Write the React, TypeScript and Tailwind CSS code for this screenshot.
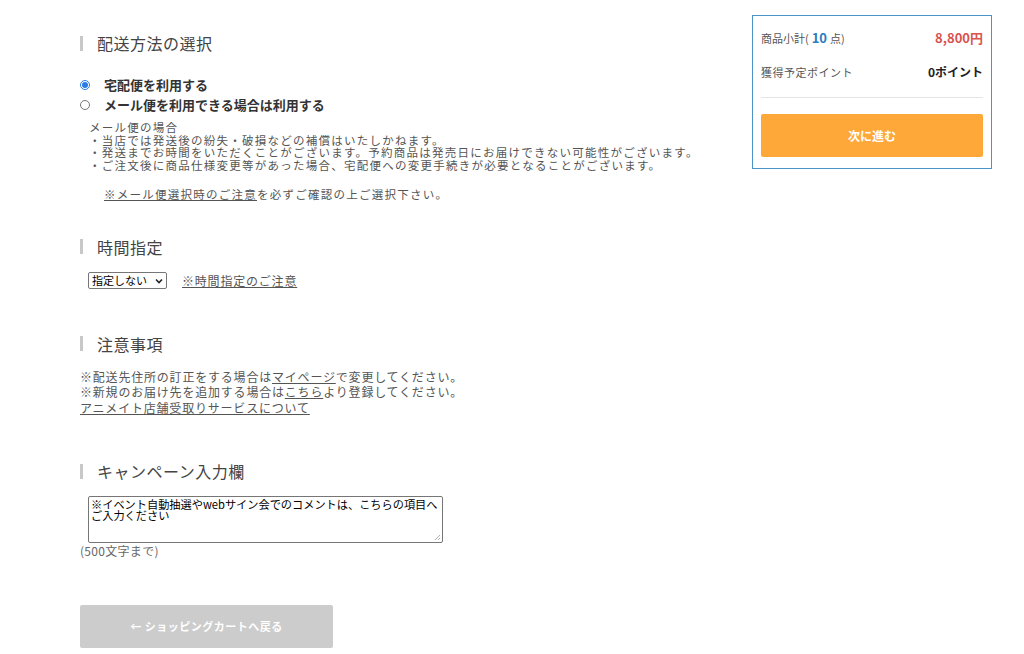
import React from "react";

const font = { fontFamily: '"Noto Sans CJK JP", "Noto Sans", sans-serif' };

function Heading({ children }: { children: React.ReactNode }) {
  return (
    <div className="flex items-center h-[20px]">
      <div className="w-[3px] h-[15px] bg-[#c8c8c8] mr-[14px]" />
      <span className="text-[16px] text-[#444] tracking-[0.5px] leading-[20px]">{children}</span>
    </div>
  );
}

export default function App() {
  return (
    <div style={font} className="w-[1024px] h-[654px] bg-white relative overflow-hidden text-[#333]">
      <div className="flex">
        {/* main column */}
        <div className="pl-[80px] w-[720px] pt-[33px]">
          <Heading>配送方法の選択</Heading>
          <div className="mt-[22px] flex flex-col gap-[1px]">
            <label className="flex items-center h-[19px]">
              <span className="w-[10px] h-[10px] rounded-full border border-[#2a7be4] flex items-center justify-center">
                <span className="w-[6px] h-[6px] rounded-full bg-[#2a7be4]" />
              </span>
              <span className="ml-[14px] text-[13px] font-bold text-[#333]">宅配便を利用する</span>
            </label>
            <label className="flex items-center h-[19px]">
              <span className="w-[10px] h-[10px] rounded-full border border-[#767676]" />
              <span className="ml-[14px] text-[13px] font-bold text-[#333]">メール便を利用できる場合は利用する</span>
            </label>
          </div>
          <div className="mt-[7px] pl-[9px] text-[11.5px] leading-[12.7px] tracking-[1.25px] text-[#555]">
            <div>メール便の場合</div>
            <div>・当店では発送後の紛失・破損などの補償はいたしかねます。</div>
            <div>・発送までお時間をいただくことがございます。予約商品は発売日にお届けできない可能性がございます。</div>
            <div>・ご注文後に商品仕様変更等があった場合、宅配便への変更手続きが必要となることがございます。</div>
            <div className="mt-[16px] pl-[15px]">
              <span className="underline">※メール便選択時のご注意</span>を必ずご確認の上ご選択下さい。
            </div>
          </div>

          <div className="mt-[36px]">
            <Heading>時間指定</Heading>
          </div>
          <div className="mt-[15px] flex items-center pl-[8px]">
            <div className="h-[17px] w-[79px] border border-[#767676] rounded-[2px] flex items-center justify-between px-[3px] text-[11px] text-black">
              <span>指定しない</span>
              <svg width="8" height="6" viewBox="0 0 8 6"><path d="M1 1.5 L4 4.5 L7 1.5" stroke="#222" strokeWidth="1.6" fill="none" /></svg>
            </div>
            <span className="ml-[15px] text-[12px] tracking-[0.8px] underline text-[#555]">※時間指定のご注意</span>
          </div>

          <div className="mt-[44px]">
            <Heading>注意事項</Heading>
          </div>
          <div className="mt-[15px] text-[12px] leading-[15.5px] tracking-[0.8px] text-[#555]">
            <div>※配送先住所の訂正をする場合は<span className="underline">マイページ</span>で変更してください。</div>
            <div>※新規のお届け先を追加する場合は<span className="underline">こちら</span>より登録してください。</div>
            <div><span className="underline">アニメイト店舗受取りサービスについて</span></div>
          </div>

          <div className="mt-[46px]">
            <Heading>キャンペーン入力欄</Heading>
          </div>
          <div className="mt-[15px] pl-[8px]">
            <div className="relative w-[355px] h-[47px] border border-[#767676] rounded-[2px] px-[2px] pt-[2px] text-[11.2px] leading-[11px] text-black">
              ※イベント自動抽選やwebサイン会でのコメントは、こちらの項目へご入力ください
              <svg className="absolute right-[1px] bottom-[1px]" width="7" height="7" viewBox="0 0 7 7">
                <path d="M6 1 L1 6 M6 4 L4 6" stroke="#999" strokeWidth="0.8" />
              </svg>
            </div>
          </div>
          <div className="mt-[0px] text-[12px] text-[#666] tracking-[0.3px] leading-[16px]">(500文字まで)</div>

          <div className="mt-[46px] w-[253px] h-[43px] bg-[#cccccc] rounded-[2px] flex items-center justify-center text-white text-[11px] font-bold tracking-[0.5px]">
            ← ショッピングカートへ戻る
          </div>
        </div>

        {/* sidebar */}
        <div className="ml-[32px] mt-[15px] w-[240px] h-[154px] border border-[#4b94c8] px-[8px] pt-[13px]">
          <div className="flex items-center justify-between h-[18px]">
            <span className="text-[11px] text-[#555]">商品小計(<span className="text-[#2a7bc0] font-bold text-[13px]"> 10 </span>点)</span>
            <span className="text-[13px] font-bold text-[#d9534f]">8,800円</span>
          </div>
          <div className="flex items-center justify-between h-[18px] mt-[16px]">
            <span className="text-[11px] text-[#555] tracking-[0.5px]">獲得予定ポイント</span>
            <span className="text-[12px] font-bold text-[#222]">0ポイント</span>
          </div>
          <div className="mt-[16px] border-t border-[#e5e5e5]" />
          <div className="mt-[16px] h-[43px] bg-[#ffa83a] rounded-[2px] flex items-center justify-center text-white text-[12px] font-bold">
            次に進む
          </div>
        </div>
      </div>
    </div>
  );
}
